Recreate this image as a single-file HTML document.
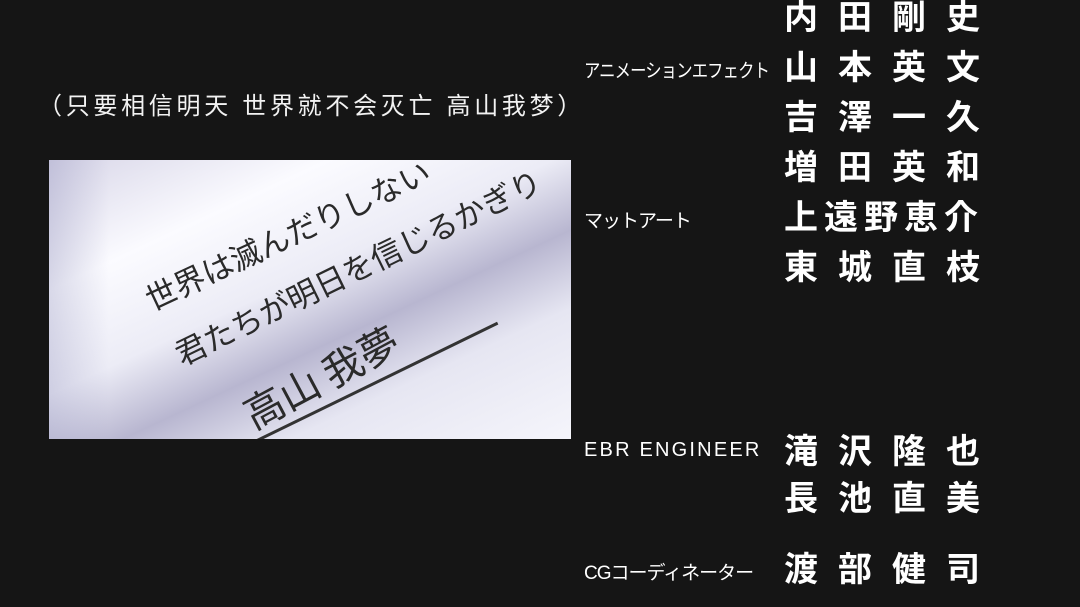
<!DOCTYPE html>
<html><head><meta charset="utf-8"><style>
body{margin:0;width:1080px;height:607px;background:#151515;overflow:hidden;position:relative;font-family:"Liberation Sans","Noto Sans CJK JP",sans-serif;color:#fff}
.t{position:absolute;white-space:nowrap}
.cap{left:38px;top:86px;font-size:24px;letter-spacing:3.7px;font-family:"Liberation Sans","Noto Sans CJK SC",sans-serif;color:#f2f2f2}
.lab{font-size:19px;left:584px;transform-origin:left top;letter-spacing:-1px}
.nm{font-size:34px;font-weight:bold;left:784px;letter-spacing:20px}
.nm2{letter-spacing:6px}
.img{position:absolute;left:49px;top:160px;width:522px;height:279px;overflow:hidden;
background:linear-gradient(155deg,#d8d6e8 0%,#fbfbff 25%,#ececf6 45%,#b8b6d0 60%,#e6e6f2 75%,#f5f5fb 100%)}
.hw{position:absolute;color:#2a2a2a;line-height:1;font-family:"WenQuanYi Zen Hei","Noto Sans CJK JP",sans-serif;transform-origin:left bottom;white-space:nowrap}
</style></head><body>
<div class="t cap">（只要相信明天 世界就不会灭亡 高山我梦）</div>
<div class="img">
 <div style="position:absolute;left:0;top:0;width:60px;height:279px;background:linear-gradient(90deg,rgba(150,150,190,.35),transparent)"></div>
 <div class="hw" style="left:104px;top:122px;font-size:31px;transform:rotate(-25deg)">世界は滅んだりしない</div>
 <div class="hw" style="left:134px;top:177px;font-size:31px;transform:rotate(-26deg)">君たちが明日を信じるかぎり</div>
 <div class="hw" style="left:206px;top:233px;font-size:40px;transform:rotate(-28deg)">高山 我夢</div>
 <div style="position:absolute;left:206px;top:280px;width:270px;height:3px;background:#333;transform:rotate(-26deg);transform-origin:left"></div>
</div>
<div class="t lab" style="top:56px;transform:scaleX(0.86)">アニメーションエフェクト</div>
<div class="t lab" style="top:206px">マットアート</div>
<div class="t lab" style="top:439px;font-size:20px;letter-spacing:2.2px">EBR ENGINEER</div>
<div class="t lab" style="top:558px">CGコーディネーター</div>
<div class="t nm" style="top:-10px">内田剛史</div>
<div class="t nm" style="top:40px">山本英文</div>
<div class="t nm" style="top:90px">吉澤一久</div>
<div class="t nm" style="top:140px">増田英和</div>
<div class="t nm nm2" style="top:190px">上遠野恵介</div>
<div class="t nm" style="top:240px">東城直枝</div>
<div class="t nm" style="top:424px">滝沢隆也</div>
<div class="t nm" style="top:471px">長池直美</div>
<div class="t nm" style="top:542px">渡部健司</div>
</body></html>
